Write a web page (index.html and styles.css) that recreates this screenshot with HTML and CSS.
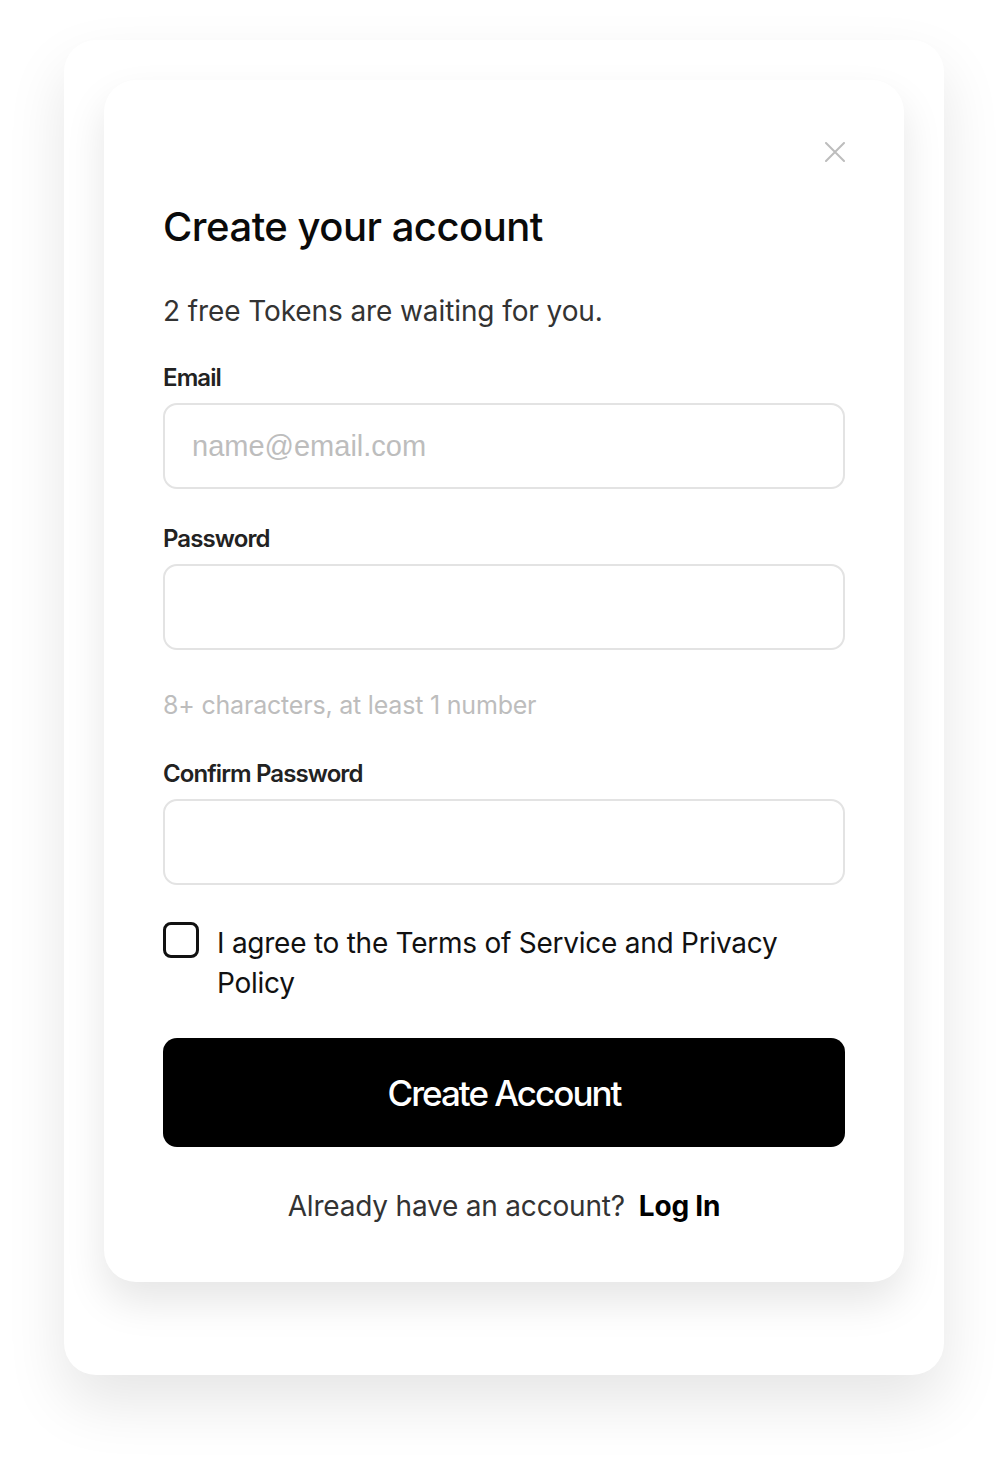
FILE: index.html
```html
<!DOCTYPE html>
<html lang="en">
<head>
<meta charset="utf-8">
<title>Create your account</title>
<link rel="stylesheet" href="styles.css">
</head>
<body>
<div class="outer">
  <div class="card">
    <div class="close-row">
      <button class="close" aria-label="Close">
        <svg width="20" height="20" viewBox="0 0 20 20"><path d="M1 1L19 19M19 1L1 19" stroke="#bdbdbd" stroke-width="2" fill="none" stroke-linecap="round"/></svg>
      </button>
    </div>
    <h1 class="title">Create your account</h1>
    <p class="subtitle">2 free Tokens are waiting for you.</p>
    <form class="form">
      <div class="field">
        <label class="label">Email</label>
        <input class="input" type="email" placeholder="name@email.com">
      </div>
      <div class="field field-pw">
        <label class="label">Password</label>
        <input class="input" type="password">
      </div>
      <p class="hint">8+ characters, at least 1 number</p>
      <div class="field field-confirm">
        <label class="label">Confirm Password</label>
        <input class="input" type="password">
      </div>
      <label class="agree">
        <span class="box"></span>
        <span class="agree-text">I agree to the Terms of Service and Privacy Policy</span>
      </label>
      <button type="button" class="submit">Create Account</button>
    </form>
    <p class="footer">Already have an account?<a class="login">Log In</a></p>
  </div>
</div>
</body>
</html>
```

FILE: styles.css
```css
* { box-sizing: border-box; }
html, body { margin: 0; background: #ffffff; }
body {
  padding: 40px 64px 89px;
  font-family: Inter, "Noto Sans", sans-serif;
}
.outer {
  width: 880px;
  background: #fff;
  border-radius: 32px;
  padding: 40px 40px 93px;
  box-shadow: 0 28px 60px rgba(0,0,0,0.10);
}
.card {
  background: #fff;
  border-radius: 32px;
  padding: 62px 59px 56px;
  box-shadow: 0 20px 40px rgba(0,0,0,0.10);
  height: 1202px;
}
.close-row {
  display: flex;
  justify-content: flex-end;
}
.close {
  width: 20px;
  height: 20px;
  padding: 0;
  border: 0;
  background: none;
  display: block;
}
.close svg { display: block; }
.title {
  margin: 41px 0 0;
  font-size: 40px;
  line-height: 48px;
  font-weight: 500;
  letter-spacing: -0.5px;
  color: #0a0a0a;
}
.subtitle {
  margin: 42px 0 0;
  font-size: 28px;
  line-height: 36px;
  font-weight: 400;
  color: #333;
  letter-spacing: -0.1px;
}
.form { margin: 34px 0 0; display: flex; flex-direction: column; }
.field { display: flex; flex-direction: column; gap: 10px; }
.field-pw { margin-top: 35px; }
.field-confirm { margin-top: 39px; }
.label {
  font-size: 24px;
  line-height: 30px;
  font-weight: 600;
  color: #222;
  letter-spacing: -0.9px;
}
.input {
  width: 100%;
  height: 86px;
  border: 2px solid #e3e3e3;
  border-radius: 14px;
  padding: 0 27px;
  font-family: "Liberation Sans", Arial, sans-serif;
  font-size: 29px;
  color: #222;
  background: #fff;
  outline: none;
}
.input::placeholder { color: #bdbdbd; }
.hint {
  margin: 40px 0 0;
  font-size: 25px;
  line-height: 30px;
  color: #bdbdbd;
  letter-spacing: -0.2px;
}
.agree {
  margin-top: 37px;
  display: flex;
  align-items: flex-start;
  gap: 18px;
}
.box {
  flex: none;
  width: 36px;
  height: 36px;
  border: 3px solid #111;
  border-radius: 8px;
}
.agree-text {
  margin-top: 1px;
  font-size: 28px;
  line-height: 40px;
  color: #111;
  letter-spacing: -0.25px;
  max-width: 600px;
}
.submit {
  margin-top: 35px;
  height: 109px;
  width: 100%;
  border: 0;
  border-radius: 14px;
  background: #000;
  color: #fff;
  font-family: Inter, "Noto Sans", sans-serif;
  font-size: 35px;
  font-weight: 500;
  letter-spacing: -2px;
}
.footer {
  margin: 39px 0 0;
  text-align: center;
  font-size: 28px;
  line-height: 40px;
  color: #333;
  letter-spacing: -0.2px;
}
.login {
  margin-left: 14px;
  font-weight: 700;
  color: #000;
  letter-spacing: -0.2px;
}
```
